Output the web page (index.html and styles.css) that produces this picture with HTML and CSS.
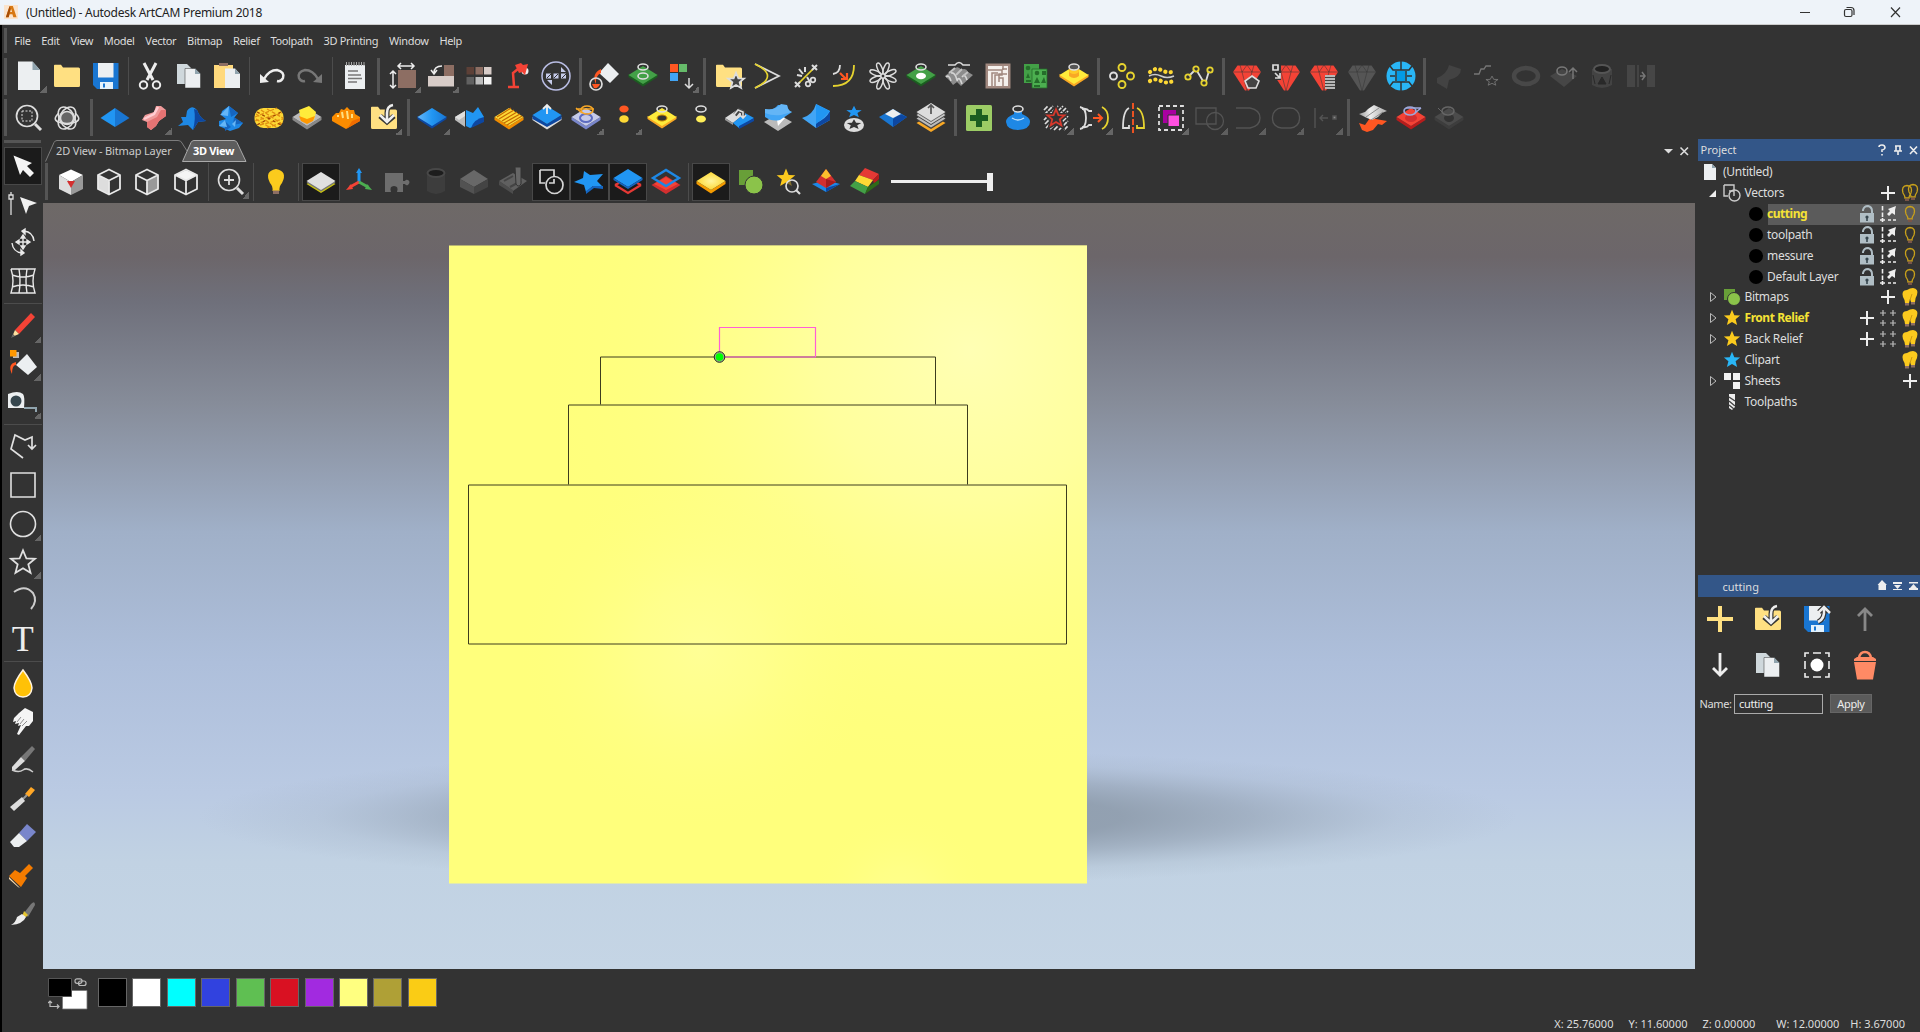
FILE: index.html
```html
<!DOCTYPE html>
<html lang="en">
<head>
<meta charset="utf-8">
<title>(Untitled) - Autodesk ArtCAM Premium 2018</title>
<link rel="stylesheet" href="styles.css">
</head>
<body>
<svg class="defs" width="0" height="0">
  <defs>
    <path id="top" d="M0-10L14.5-1L0 8L-14.5-1z"/>
    <path id="side" d="M-14.5-1L0 8V11.500L-14.500 2zM0 8L14.500-1V2L0 11.500z"/>
    <path id="star" d="M0-8.200L2.300-2.700L8.100-2.500L3.600 1.300L5.100 7L0 3.900L-5.100 7L-3.600 1.300L-8.100-2.500L-2.300-2.700z"/>
    <path id="folder" d="M-13-10.500q0-.8.8-.8H-6l2 2.800H11.500q1.500 0 1.500 1.500V9.500q0 1.500-1.500 1.500H-11.500q-1.500 0-1.500-1.500z" fill="#ffe082"/>
    <g id="copy"><path d="M-12-12H-2L3-7V8H-12z" fill="#cfd8dc"/><path d="M-4-7.500H6L11.500-2V12H-4z" fill="#eceff1" stroke="#333" stroke-width=".5"/><path d="M6-7.500V-2H11.500z" fill="#90a4ae"/></g>
    <g id="save"><path d="M-13-13H12.500V13H-9L-13 9z" fill="#1976d2"/><path d="M-8-13H7.500V1.500H-8z" fill="#eceff1"/><path d="M-6 6H7V13H-6z" fill="#e3f2fd"/><path d="M-3 7.500H-1V11.500H-3z" fill="#1976d2"/></g>
    <g id="import"><use href="#folder"/><path d="M8-13Q3-12 3-5V3M-4-2L3 4L10-2" fill="none" stroke="#333" stroke-width="5"/><path d="M9-13Q3-12 3-5V3M-4-3L3 4L10-3" fill="none" stroke="#eee" stroke-width="2.600"/></g>
    <g id="gem"><path d="M-9.500-10.500H9.500L14-4L2 14.500H-2L-14-4z"/><path d="M-14-4H14M-7-11L-5-4L0 15L5-4L7-11M-5-4L0-11L5-4" fill="none" stroke="#333" stroke-opacity=".5"/></g>
    <g id="cubeback"><path d="M0-12.500L11-7V7L0 12.500L-11 7V-7zM-11-7L0-1.500L11-7M0-1.500V12.500" fill="none" stroke="#e8e8e8" stroke-width="1.800" stroke-linejoin="round"/></g>
    <g id="brush"><path d="M1-1L8-10Q12-14 12-9L5 3z" fill="#777"/><path d="M0 0L1-3L5 1L3 3L-1 2z" fill="#e6c52f"/><path d="M-1 0L3 3Q0 10-12 11Q-7 8-6 3z" fill="#eee"/></g>
    <g id="lock"><path d="M-7-1H7V8.500H-7z" fill="#b0bec5"/><path d="M-4-3V-4Q-3-8 1-8Q5-7 5-3V0" fill="none" stroke="#b0bec5" stroke-width="2"/><circle cy="3" r="1.600" fill="#37474f"/><path d="M-.8 3H.8V7H-.8z" fill="#37474f"/></g>
    <g id="snap" fill="none" stroke="#eee" stroke-width="1.600"><path d="M-5.500-8V3" stroke-dasharray="4.500 2"/><path d="M-8 6H-3M0 6H3M5 6H8M-5.500 4V8"/><path d="M8-8L7-4L7 1L4-1L1 2L-1 0L2-3L0-5z" fill="#eee" stroke="none"/></g>
    <g id="bulb"><path d="M-2 5Q-2 3-4 0Q-6-7 0-7.500Q6-7 4 0Q2 3 2 5z" fill="none" stroke="#c9a11b" stroke-width="1.300"/><path d="M-2 5.500H2V8H-2z" fill="#795548"/></g>
    <g id="bulbs"><path d="M-5 6Q-5 3-7 0Q-9-7-3-7Q0-9 3-9Q9-8 7-2Q5 1 5 5H1L0 2L-1 6z" fill="#fbc91e"/><path d="M-5 6H-1V8.500H-5zM1 5H5V7.500H1z" fill="#8d6e63"/><path d="M0 3L2-3" stroke="#b8860b" stroke-width=".7"/></g>
    <path id="plus" d="M0-7V7M-7 0H7" stroke="#eee" stroke-width="2" fill="none"/>
    <path id="grid" d="M-5-8V-2M-8-5H-2M5-8V-2M2-5H8M-5 2V8M-8 5H-2M5 2V8M2 5H8" stroke="#bbb" stroke-width="1.200" fill="none"/>
    <path id="closed" d="M-2.500-4.500L3 0L-2.500 4.500z" fill="none" stroke="#bbb"/>
    <g id="bitmaps"><path d="M-8-8H3V3H-8z" fill="#689f38"/><circle cx="2" cy="2" r="6.500" fill="#8bc34a" stroke="#333"/></g>
    <g id="vectors" fill="none" stroke="#ccc" stroke-width="1.400"><path d="M-8-8H2V-3M-8-8V3H-4M-3-2H2V3"/><circle cx="2.500" cy="2.500" r="5.500"/></g>
    <linearGradient id="blue" x2="1"><stop stop-color="#64b5f6"/><stop offset=".5" stop-color="#2196f3"/><stop offset="1" stop-color="#1976d2"/></linearGradient>
    <radialGradient id="gold"><stop stop-color="#fff59d"/><stop offset="1" stop-color="#fdd835"/></radialGradient>
    <linearGradient id="grey" x2="1"><stop stop-color="#999"/><stop offset=".4" stop-color="#eee"/><stop offset="1" stop-color="#aaa"/></linearGradient>
  </defs>
</svg>

<div class="window">
<header class="titlebar">
  <svg class="logo" viewBox="0 0 15 15"><path d="M0 0H15V15H0z" fill="#fbe3cb"/><path d="M2 13L6 1H9.500L13.500 13H10L9 10H6L5 13z" fill="#d87812"/><path d="M6.700 7.500H8.500L7.600 4z" fill="#fff1e0"/><path d="M2 13L6 1L7 4L5 13z" fill="#a74d07"/></svg>
  <span class="title">(Untitled) - Autodesk ArtCAM Premium 2018</span>
  <svg class="winctl" viewBox="0 0 110 24" fill="none" stroke="#333" stroke-width="1.200"><path d="M4 12.500H14M95 7.500L104 17M104 7.500L95 17"/><rect x="48.500" y="9.500" width="7.500" height="7" rx="1.500"/><path d="M50.500 7.500H55Q58 7.500 58 10.500V15"/></svg>
</header>

<nav class="menu"><i class="grip"></i><span>File</span><span>Edit</span><span>View</span><span>Model</span><span>Vector</span><span>Bitmap</span><span>Relief</span><span>Toolpath</span><span>3D Printing</span><span>Window</span><span>Help</span></nav>

<div class="bar bar-main">
  <i class="grip"></i>
  <b class="more"><svg viewBox="-19 -19 38 38"><path d="M-11-14.500H3.500L11-6V14H-11z" fill="#eceff1"/><path d="M3.500-14.500V-6H11z" fill="#90a4ae"/></svg></b>
  <b><svg viewBox="-19 -19 38 38"><use href="#folder"/></svg></b>
  <b><svg viewBox="-19 -19 38 38"><use href="#save"/></svg></b>
  <i class="thin"></i>
  <b><svg viewBox="-19 -19 38 38" fill="none" stroke="#eee"><path d="M-6-13L3 4M6-13L-3 4" stroke-width="3"/><circle cx="-6.500" cy="9" r="3.700" stroke-width="2"/><circle cx="6.500" cy="9" r="3.700" stroke-width="2"/></svg></b>
  <b><svg viewBox="-19 -19 38 38"><use href="#copy"/></svg></b>
  <b><svg viewBox="-19 -19 38 38"><path d="M-13-11H6V12H-13z" fill="#ffd97c"/><path d="M-8-13H1V-10H-8z" fill="#8d6e63"/><path d="M-2-7.500H8L13-2V12H-2z" fill="#eceff1"/><path d="M8-7.500V-2H13z" fill="#90a4ae"/></svg></b>
  <i class="thin"></i>
  <b><svg viewBox="-19 -19 38 38"><path d="M-8 3Q-3-6 5-6Q13-4 11 2Q9 6 5 5" fill="none" stroke="#eee" stroke-width="2.500"/><path d="M-12-2L-12 7L-3 6z" fill="#eee"/></svg></b>
  <b><svg viewBox="-19 -19 38 38"><path d="M8 3Q3-6-5-6Q-13-4-11 2Q-9 6-5 5" fill="none" stroke="#777" stroke-width="2.500"/><path d="M12-2L12 7L3 6z" fill="#777"/></svg></b>
  <i class="thin"></i>
  <b><svg viewBox="-19 -19 38 38"><path d="M-10-11H10V13H-10z" fill="#eceff1"/><path d="M-9-12H10" stroke="#aaa" stroke-width="4" stroke-dasharray="1 1.500"/><path d="M-7-5H3M-7-1H6M-7 2.500H7M-7 6H2" stroke="#777" stroke-width="1.300"/></svg></b>
  <i class="thick"></i>
  <b class="more"><svg viewBox="-19 -19 38 38"><path d="M-5-6H13V12H-5z" fill="#8d6e63"/><path d="M-5-10H11M-2-13L-5-10L-2-7M8-13L11-10L8-7M-10-5V12M-13-2L-10-5L-7-2M-13 9L-10 12L-7 9" fill="none" stroke="#eee" stroke-width="1.500"/></svg></b>
  <b class="more"><svg viewBox="-19 -19 38 38"><path d="M3-11H13V0H3z" fill="#8d6e63"/><path d="M-13 0H13V10.500H-13z" fill="#d7ccc8"/><path d="M1-10Q-7-10-7-3M-10-6L-7-2L-4-6" fill="none" stroke="#eee" stroke-width="1.500"/></svg></b>
  <b><svg viewBox="-19 -19 38 38"><path d="M-12.500-9h7.500v7.500h-7.500z" fill="#5d4037"/><path d="M-3.500-9h7.500v7.500h-7.500z" fill="#8d6e63"/><path d="M5-9h7.500v7.500H5z" fill="#d7ccc8"/><path d="M-12.500 1h7.500v7.500h-7.500z" fill="#616161"/><path d="M-3.500 1h7.500v7.500h-7.500z" fill="#bdbdbd"/><path d="M5 1h7.500v7.500H5z" fill="#f5f5f5"/></svg></b>
  <b><svg viewBox="-19 -19 38 38"><circle cx="7" cy="-5" r="3.500" fill="#eee"/><path d="M-3-11L3-13L5-11L10-12L7-1L4-4L1-3z" fill="#f44336"/><path d="M0-7L-5-3L-4 10M-10 11H1" fill="none" stroke="#f44336" stroke-width="2.500"/></svg></b>
  <b><svg viewBox="-19 -19 38 38"><circle r="14" fill="none" stroke="#b9bde4" stroke-width="1.500"/><path d="M-10-2.500h5v5h-5zM-2.500-2.500h5v5h-5zM5-2.500h5v5H5zM5-9V-4H10zM-9 4H-4V9z" fill="#c5cae9"/><path d="M-9 2L-5-2M-2 2L2-2M6 2L10-2" stroke="#333"/></svg></b>
  <i class="thick"></i>
  <b><svg viewBox="-19 -19 38 38"><path d="M4-13L15-2L6 7L-5-3z" fill="#eceff1"/><path d="M-3-7Q-13-2-8 8Q-9 0-3-3z" fill="#ff5722"/><circle cx="-8" cy="8" r="6" fill="none" stroke="#ddd" stroke-width="1.700"/><path d="M-12 8H-4Q-6 13-10 12z" fill="#ff5722"/></svg></b>
  <b><svg viewBox="-19 -19 38 38"><use href="#side" fill="#1b5e20" y="-1"/><use href="#top" fill="#43a047"/><g fill="none" stroke="#ddd" stroke-width="1.600"><ellipse cy="-9" rx="5" ry="3"/><ellipse cy="0" rx="5" ry="3"/></g></svg></b>
  <b class="more"><svg viewBox="-19 -19 38 38"><path d="M-11-12h8v8h-8z" fill="#ff5722"/><path d="M-2-12h8v8h-8z" fill="#66bb6a"/><path d="M-11-3h8v8h-8z" fill="#42a5f5"/><path d="M8 2V12M4 8L8 12L12 8" fill="none" stroke="#ddd" stroke-width="1.500"/></svg></b>
  <i class="thick"></i>
  <b><svg viewBox="-19 -19 38 38"><use href="#folder"/><use href="#star" transform="translate(7 5)" fill="#444" stroke="#ddd" stroke-width="1.700"/></svg></b>
  <b><svg viewBox="-19 -19 38 38" fill="none" stroke-width="1.700"><path d="M-12-12L12 0L-12 12" stroke="#ddd"/><path d="M-12-12Q13 0-12 12" stroke="#e6d32f"/></svg></b>
  <b><svg viewBox="-19 -19 38 38" fill="none" stroke="#ddd" stroke-width="1.700"><path d="M-7 7L7-7" stroke="#e6d32f"/><path d="M-11 6L-6 11M-6 6L-11 11M6-11L11-6M11-11L6-6M-9-1L-4 0M-7-7L-3-2M-1-9V-4M1 1L4 6" stroke-width="2"/><circle cx="2" cy="8" r="2.300"/><circle cx="7" cy="4" r="2.300"/></svg></b>
  <b><svg viewBox="-19 -19 38 38" fill="none" stroke-width="1.800"><path d="M-11-2Q-4-3-4-11" stroke="#ddd"/><path d="M10-11Q10 10-11 10" stroke="#e6d32f"/><path d="M-4-3L2 3M3-3V3H-3" stroke="#ff5722" stroke-width="2.200"/></svg></b>
  <b><svg viewBox="-19 -19 38 38" fill="none" stroke="#ddd" stroke-width="1.500"><g id="petals"><ellipse cy="-8" rx="2.300" ry="6" transform="rotate(22)"/><ellipse cy="8" rx="2.300" ry="6" transform="rotate(22)"/><ellipse cx="-8" rx="6" ry="2.300" transform="rotate(22)"/><ellipse cx="8" rx="6" ry="2.300" transform="rotate(22)"/></g><use href="#petals" transform="rotate(45)"/></svg></b>
  <b><svg viewBox="-19 -19 38 38"><use href="#side" fill="#1b5e20" y="-1"/><use href="#top" fill="#43a047"/><ellipse cy="0" rx="5" ry="3.200" fill="#fff"/><ellipse cy="-9" rx="5" ry="3" fill="none" stroke="#ddd" stroke-width="1.600"/></svg></b>
  <b><svg viewBox="-19 -19 38 38"><path d="M-14 0L-4-8Q0-10 2-6Q7-9 9-4L14-1L2 10L-2 6L-6 9L-9 5z" fill="#8c8c8c"/><path d="M-13 1Q-10-2-8 5M-8-3Q-4-4-2 4M-2 5Q0-1 3 8M3 1Q6-3 8 4" fill="none" stroke="#d5d5d5" stroke-width="1.600"/><path d="M-4-8L-10-3M3-7L-3-1M9-4L4 0" stroke="#c2c2c2" stroke-width="2"/><path d="M-11-11H-4Q0-16 4-11H11" fill="none" stroke="#ddd" stroke-width="1.500"/></svg></b>
  <b><svg viewBox="-19 -19 38 38"><path d="M-12.500-12.500h25v25h-25z" fill="#a1887f"/><path d="M-10-10H10V10H-10z" fill="#f5f0ec"/><path d="M-10-6H4V-1H-3V10M-6 10V-3H0M9-7H4M5-10V-6M9-2H1V6M1 2H5V10" fill="none" stroke="#a1887f" stroke-width="1.500"/></svg></b>
  <b><svg viewBox="-19 -19 38 38"><path d="M-12-12H3V7H-12z" fill="#43a047"/><path d="M-4-7H11V12H-4z" fill="#4caf50" stroke="#276b2b" stroke-width=".8"/><g fill="#256d2a"><circle cx="-8" cy="-8" r="2.300"/><path d="M-10 2L-8-3L-6 2zM-10 4H-5V6H-10zM-2 7L1 1L4 7zM5 7L8 1L10 7zM-2 9H4V11H-2zM6-5H10V-1H6z"/><circle cx="1" cy="-3" r="2.300"/></g></svg></b>
  <b><svg viewBox="-19 -19 38 38"><use href="#side" fill="#f9a825" y="-1"/><use href="#top" fill="#ffeb3b"/><path d="M-5-7V0Q0 4 5 0V-7z" fill="#f9a825"/><ellipse cy="-5" rx="5" ry="3" fill="#ffca28"/><ellipse cy="-9" rx="5" ry="3" fill="#555" stroke="#ddd" stroke-width="1.600"/></svg></b>
  <i class="thick"></i>
  <b><svg viewBox="-19 -19 38 38" fill="none" stroke-width="1.900" stroke="#e6d32f"><circle cy="-8.500" r="3.500"/><circle cx="8.500" r="3.500"/><circle cy="8.500" r="3.500"/><circle cx="-8.500" r="3.500" stroke="#ddd"/></svg></b>
  <b><svg viewBox="-19 -19 38 38" fill="none"><path d="M-12 0Q-6-3 0 0T13 0" stroke="#ccc" stroke-width="1.500"/><path d="M-11-4Q-5-9 0-6T12-4M-11 5Q-5 2 0 5T12 5" stroke="#fdd835" stroke-width="4.200" stroke-dasharray=".1 5.400" stroke-linecap="round"/></svg></b>
  <b><svg viewBox="-19 -19 38 38" fill="none" stroke="#e6d32f" stroke-width="1.800"><path d="M-10 0L-4-6M-2-5L4 5M7 5L10-5" stroke="#ddd"/><circle cx="-11" cy="1" r="2.700"/><circle cx="-3" cy="-7" r="2.700"/><circle cx="5" cy="7" r="2.700"/><circle cx="11" cy="-6" r="2.700"/></svg></b>
  <i class="thick"></i>
  <b><svg viewBox="-19 -19 38 38"><use href="#gem" fill="#f44336"/><path d="M5 0L12 5L9 12H1L-2 5z" fill="#444" stroke="#ddd" stroke-width="1.600"/></svg></b>
  <b><svg viewBox="-19 -19 38 38"><use href="#gem" fill="#f44336"/><path d="M-14-12h9V4h-9z" fill="#333"/><path d="M-13-11h5v5h-5zM-11-3L-6 2M-6-3V2H-11" fill="none" stroke="#ddd" stroke-width="1.700"/></svg></b>
  <b><svg viewBox="-19 -19 38 38"><use href="#gem" fill="#f44336"/><path d="M1-1H11V13H1z" fill="#444"/><path d="M1 0H11M1 3H11M1 6H11M1 9H11M1 12H11" stroke="#ddd" stroke-width="1.700"/></svg></b>
  <b><svg viewBox="-19 -19 38 38"><use href="#gem" fill="#555"/></svg></b>
  <b><svg viewBox="-19 -19 38 38"><circle r="14.500" fill="#29b6f6"/><path d="M-4-5H4V6H-4z" fill="#039be5"/><path d="M0-15V-6M0 15V6M-11-10L-8-6H8L11-10M-11 10L-8 6H8L11 10M-5-5V5M5-5V5M-11 0H-6M6 0H11" fill="none" stroke="#333" stroke-width="1.500"/></svg></b>
  <i class="thick"></i>
  <b class="off"><svg viewBox="-19 -19 38 38"><path d="M-12 2Q-2-2 0-11L12-7Q12 1 0 4L-2 13L-12 7z" fill="#464646"/></svg></b>
  <b><svg viewBox="-19 -19 38 38" fill="none" stroke="#777" stroke-width="1.300"><path d="M-13-2H-8L-6-7H-3L-1-10H4"/><use href="#star" transform="translate(5 5) scale(.75 .6)"/></svg></b>
  <b><svg viewBox="-19 -19 38 38"><ellipse rx="12" ry="8" fill="none" stroke="#484848" stroke-width="4.500"/></svg></b>
  <b><svg viewBox="-19 -19 38 38"><path d="M-14 0L-2-7L13 0L0 11z" fill="#464646"/><ellipse cx="-2" cy="-5" rx="5" ry="4" fill="none" stroke="#777" stroke-width="1.600"/><path d="M9 3V-8M5-4L9-8L13-4" fill="none" stroke="#777" stroke-width="1.500"/></svg></b>
  <b><svg viewBox="-19 -19 38 38"><path d="M-10-7H10V9Q0 15-10 9z" fill="#434343"/><ellipse cy="-7" rx="8" ry="4" fill="#222" stroke="#555" stroke-width="2"/><path d="M-4 8L0 1L4 8zM-9-1L-7 8M9-1L7 8" fill="#292929" stroke="#292929"/></svg></b>
  <b><svg viewBox="-19 -19 38 38"><path d="M-14-11h8v22h-8zM6-11h8v22H6z" fill="#464646"/><path d="M-3-11V11" stroke="#444" stroke-width="2"/><path d="M-1 0H4M1-4L4 0L1 4" fill="none" stroke="#777" stroke-width="1.500"/></svg></b>
</div>

<div class="bar bar-relief">
  <i class="grip"></i>
  <b><svg viewBox="-19 -19 38 38" fill="none" stroke="#ddd"><circle cx="-2" cy="-2" r="10.500" stroke-width="1.700"/><path d="M-7-7H3V3H-7z" stroke-dasharray="2 1.500"/><path d="M6 6L12 12" stroke-width="3"/></svg></b>
  <b><svg viewBox="-19 -19 38 38" fill="none" stroke="#ddd" stroke-width="1.500"><circle r="6.500" fill="#666"/><ellipse rx="12" ry="7.500" transform="rotate(60)"/><ellipse rx="12" ry="7.500" transform="rotate(120)"/><path d="M-8-5Q-15 1-9 4Q0 7 9 4Q15 1 8-5"/></svg></b>
  <i class="thick"></i>
  <b><svg viewBox="-19 -19 38 38"><path d="M0-10L14.500 0L0 9z" fill="#1976d2"/><path d="M0-10L-14.500 0L0 9z" fill="#2196f3"/></svg></b>
  <b class="more"><svg viewBox="-19 -19 38 38"><path d="M-12 2L-9-3L0-6L2-12L7-12L12-8V-2L5 3L2 8L-3 12L-7 9V4z" fill="#ef9a9a"/><path d="M-7 4L3-1L7-8L12-8V-2L5 3L2 8L-3 12L-7 9z" fill="#e57373"/><path d="M-10 1L0-4L4-11" fill="none" stroke="#ffcdd2" stroke-width="2.500"/></svg></b>
  <b><svg viewBox="-19 -19 38 38"><path d="M-5-7Q0-14 5-8Q8 0 14 3L6 4L1 12L-4 7L-14 8L-9 4L-11-1L-6-1z" fill="#1e88e5"/><path d="M5-8Q8 0 14 3L6 4L1 12Q4 0 2-9z" fill="#0d47a1"/></svg></b>
  <b><svg viewBox="-19 -19 38 38"><path d="M-9-7L-2-12L7-5L3 0L12 5L8 10L-1 13L-12 8V3L-5 1L-10-3z" fill="#1e88e5"/><path d="M-2-12L7-5L0-1zM3-1L12 5L2 7zM-6 3L0 9L-6 13z" fill="#1565c0"/><path d="M-11-3L-2-12L-3-2zM-12 8L-6 2L-4 9zM1 6L5 2L4 9z" fill="#64b5f6"/></svg></b>
  <b><svg viewBox="-19 -19 38 38"><rect x="-14.500" y="-10" width="29" height="20" rx="9" fill="#fdd835"/><path d="M-14-1L8-10M-14 3L13-5M-9 7L14 1M-2 10L14 4M-8-8L13 6M-13-4L7 9M-2-9L14 0M-13 1L0 9" stroke="#e08f12" stroke-width="1.300" stroke-dasharray="4 1.500"/><path d="M-12-6L12 7M12-6L-12 7" stroke="#a34804" stroke-width="1.300" stroke-dasharray="3 3"/></svg></b>
  <b><svg viewBox="-19 -19 38 38"><use href="#side" fill="#888"/><use href="#top" fill="#bbb"/><path d="M-8-8L2-12L9-6L7 2L0 5L-6 2z" fill="#ffeb3b"/><path d="M-8-2L0 1L8-2L6 3L0 6L-6 3z" fill="#ff9800"/></svg></b>
  <b><svg viewBox="-19 -19 38 38"><path d="M-14-1L-10-5L-7-5L-5-9L-2-8L1-11L4-8L8-8L9-4L14-1V3L0 11L-14 3z" fill="#fb8c00"/><path d="M-8-3V-1M-4-6L-3 0M1-7L2 1M6-4V0" stroke="#ffe082" stroke-width="2"/><path d="M0 11L14 3V0L6 3L3 8z" fill="#f06c00"/></svg></b>
  <b class="more"><svg viewBox="-19 -19 38 38"><use href="#import"/></svg></b>
  <i class="thick"></i>
  <b class="more"><svg viewBox="-19 -19 38 38"><use href="#side" fill="#0d47a1" y="-1"/><use href="#top" fill="url(#blue)"/></svg></b>
  <b><svg viewBox="-19 -19 38 38"><path d="M-15-1L-5-7V9L-15 2z" fill="#bbb"/><path d="M-15-1L-5-7V-2L-11 2z" fill="#e0e0e0"/><path d="M-4-8L3-5L8-11L14-1V3L0 10L-4 8z" fill="#2196f3"/><path d="M14-1V4L1 10Q4 1 14-1z" fill="#0d47a1"/></svg></b>
  <b><svg viewBox="-19 -19 38 38"><use href="#side" fill="#ef8b00"/><use href="#top" fill="#fdd835"/><path d="M-12-1L2-10M-10 1L5-8M-7 3L8-6M-5 5L11-4M-2 7L13-2" stroke="#c66900" stroke-width="1.200"/></svg></b>
  <b><svg viewBox="-19 -19 38 38"><use href="#side" fill="#ddd"/><path d="M-14.500-3L0 6L14.500-3V1L0 9L-14.500 1z" fill="#0d47a1"/><use href="#top" y="-2" fill="#2196f3"/><path d="M0-4V-13M-4-9L0-13L4-9" fill="none" stroke="#eee" stroke-width="1.800"/></svg></b>
  <b class="more"><svg viewBox="-19 -19 38 38"><use href="#side" fill="#7986cb"/><use href="#top" fill="#c5cae9"/><ellipse rx="6" ry="4" fill="none" stroke="#5c6bc0" stroke-width="2"/><path d="M-10-9L8-9M-10-10L-4-5" stroke="#f9a825" stroke-width="1.500"/><ellipse cx="1" cy="-8" rx="6" ry="4" fill="none" stroke="#f9a825" stroke-width="1.600"/></svg></b>
  <b class="more"><svg viewBox="-19 -19 38 38"><ellipse cy="-9" rx="4.700" ry="3.500" fill="#ff5722"/><ellipse cy="1" rx="4.700" ry="3.800" fill="#fdd835"/></svg></b>
  <b><svg viewBox="-19 -19 38 38"><use href="#side" fill="#f9a825" y="-1"/><use href="#top" fill="#ffeb3b"/><ellipse cy="0" rx="5" ry="3" fill="#333" stroke="#c68400"/><ellipse cy="-9" rx="5" ry="3" fill="none" stroke="#ddd" stroke-width="1.600"/></svg></b>
  <b><svg viewBox="-19 -19 38 38"><ellipse cy="-9" rx="5" ry="3" fill="none" stroke="#ddd" stroke-width="1.600"/><ellipse cy="1" rx="5" ry="3.500" fill="#ffee58"/></svg></b>
  <b><svg viewBox="-19 -19 38 38"><path d="M-14 0L-2-8L4-3L-6 5z" fill="#ddd"/><path d="M-6 5L6-5L15 0L0 10z" fill="#2196f3"/><path d="M-14 0V2L-6 7V5z" fill="#999"/><path d="M15 0V3L0 11V8z" fill="#0d47a1"/><path d="M-4-3L0-8L4-6V-1" fill="none" stroke="#444" stroke-width="4"/><path d="M-5-3L-1-8L4-6L4-1M1-3L4 0L7-3" fill="none" stroke="#ddd" stroke-width="1.600"/></svg></b>
  <b><svg viewBox="-19 -19 38 38"><path d="M-14 4L0-4L14 4L0 13z" fill="#bbb"/><path d="M-2-4L7 0L0 8z" fill="#fff"/><path d="M-13-9Q-5-7 0-13L9-13Q10-7 14-6L2 2Q-6 4-13-1z" fill="#42a5f5"/><path d="M-13-9Q-3-7 3-14L9-13Q10-7 14-6L3-3Q-6-2-13-5z" fill="#64b5f6"/></svg></b>
  <b><svg viewBox="-19 -19 38 38"><path d="M-14 0Q-3-3 0-14L14-7V2L0 10z" fill="#42a5f5"/><path d="M0 10V5Q10 1 14-7V2z" fill="#0d47a1"/><path d="M0-14L14-7Q8 0 0 6z" fill="#2196f3"/></svg></b>
  <b><svg viewBox="-19 -19 38 38"><use href="#star" transform="translate(0 -6) scale(.95 .75)" fill="#2196f3"/><ellipse cy="7" rx="10" ry="7" fill="#ddd"/><use href="#star" transform="translate(0 6.500) scale(.9 .65)" fill="#333"/></svg></b>
  <b><svg viewBox="-19 -19 38 38"><path d="M-14-1L0-9L14-1L0 9z" fill="#1976d2"/><path d="M0 9L14-1L7-4L0 1z" fill="#0d47a1"/><path d="M-8-4L0-9L8-4L0 0z" fill="#eee"/></svg></b>
  <b><svg viewBox="-19 -19 38 38"><use href="#top" y="6" fill="#f9a825"/><use href="#top" y="3" fill="#444"/><use href="#top" y="1.500" fill="#bbb"/><use href="#top" y="-1" fill="#444"/><use href="#top" y="-2" fill="#ccc"/><use href="#top" y="-4" fill="#666"/><use href="#top" y="-5" fill="#ddd"/><path d="M0-4V-13M-3-10L0-13L3-10" fill="none" stroke="#555" stroke-width="1.700"/></svg></b>
  <i class="thick"></i>
  <b><svg viewBox="-19 -19 38 38"><rect x="-13" y="-13" width="26" height="26" rx="1.500" fill="#9ccc65"/><path d="M-3-9H3V-3H9V3H3V9H-3V3H-9V-3H-3z" fill="#1b5e20"/></svg></b>
  <b><svg viewBox="-19 -19 38 38"><path d="M-4-6V-4Q-12-1-12 4Q-11 12 0 12Q12 11 12 4Q12-1 4-4V-6z" fill="#1e88e5"/><path d="M-6 0Q0 4 6 0" fill="none" stroke="#bbdefb" stroke-width="1.500"/><ellipse cy="-9" rx="5" ry="3" fill="none" stroke="#ddd" stroke-width="1.600"/></svg></b>
  <b class="more"><svg viewBox="-19 -19 38 38"><path d="M-12-8L-8-12M-12-3L-3-12M-12 2L2-12M-11 6L7-12M-10 10L10-10M-6 11L12-7M-2 12L12-2M3 12L12 3M8 12L12 8" stroke="#ddd" stroke-width="1.700" stroke-dasharray="5 1"/><use href="#star" transform="scale(1.100)" fill="#333" stroke="#333" stroke-width="4"/><use href="#star" transform="scale(1.050)" fill="#333" stroke="#d7392c" stroke-width="1.700"/></svg></b>
  <b class="more"><svg viewBox="-19 -19 38 38" fill="none" stroke-width="1.800"><path d="M-14-11Q-8-10-8 0T-14 11M-12-9Q-7-10-5-7H-2M-12 9Q-7 10-5 7H-2" stroke="#ddd"/><path d="M8-11Q14-8 14 0T8 11" stroke="#e6d32f"/><path d="M-1 0H7M4-4L8 0L4 4" stroke="#ff5722" stroke-width="2"/></svg></b>
  <b><svg viewBox="-19 -19 38 38" fill="none" stroke-width="1.800"><path d="M0-15V15" stroke="#ff5722" stroke-dasharray="6 2"/><path d="M-4-10Q-10-7-10 10H-4V7" stroke="#ddd"/><path d="M4-10Q11-7 11 10H4V7" stroke="#e6d32f"/></svg></b>
  <b class="more"><svg viewBox="-19 -19 38 38"><path d="M-12-12H12V12H-12z" fill="none" stroke="#ddd" stroke-width="1.800" stroke-dasharray="4 3"/><path d="M-8-8H5V5H-8z" fill="#aa00a0"/><path d="M-3-3H8.500V8.500H-3z" fill="#ff4fe0" stroke="#333"/></svg></b>
  <b class="more off"><svg viewBox="-19 -19 38 38" fill="none" stroke="#5a5a5a" stroke-width="1.300"><path d="M-13-10H7V6H-13z"/><circle cx="6" cy="3" r="8.500"/></svg></b>
  <b class="more off"><svg viewBox="-19 -19 38 38" fill="none" stroke="#5a5a5a" stroke-width="1.400"><path d="M-12-10H2Q12-8 12 0T2 10H-12"/></svg></b>
  <b class="more off"><svg viewBox="-19 -19 38 38" fill="none" stroke="#5a5a5a" stroke-width="1.400"><rect x="-13.500" y="-10" width="27" height="20" rx="9"/></svg></b>
  <b class="more off"><svg viewBox="-19 -19 38 38" fill="none" stroke="#5a5a5a" stroke-width="1.400"><path d="M-10-10V10M-5 0H3M-2-3L-5 0L-2 3"/><path d="M8-2h3v3H8z" fill="#999"/></svg></b>
  <i class="thick"></i>
  <b><svg viewBox="-19 -19 38 38"><path d="M-14 5L-8 7L-3 0L14 3L9 7L5 6L0 12L-6 14L-11 12z" fill="#ff5722"/><path d="M-14-4L-8-6L-5-9L1-13L14-7L9-5L5-1L-1 2L-6 0z" fill="url(#grey)"/><path d="M-7-1L6-10M-2 2L10-6" stroke="#777" stroke-width=".8"/></svg></b>
  <b><svg viewBox="-19 -19 38 38"><use href="#side" fill="#b71c1c"/><use href="#top" fill="#f44336"/><ellipse cy="0" rx="6" ry="4" fill="#d32f2f"/><ellipse cx="-1" cy="-7" rx="6" ry="4" fill="none" stroke="#9fa8da" stroke-width="1.600"/><path d="M4-5L10-10M-5-10L10-10" stroke="#9fa8da" stroke-width="1.500"/></svg></b>
  <b><svg viewBox="-19 -19 38 38"><use href="#side" fill="#3d3d3d"/><use href="#top" fill="#4b4b4b"/><ellipse rx="5" ry="4" fill="#333"/><ellipse cx="-1" cy="-7" rx="6" ry="4" fill="none" stroke="#666" stroke-width="1.500"/><path d="M-6-5L-11-10" stroke="#666"/></svg></b>
</div>

<div class="workarea">
<aside class="tools">
  <i class="hgrip"></i>
  <b class="on"><svg viewBox="-19 -19 38 38"><path d="M-9.500-10.500L9-3L4 0L11 7L7 11L0 4L-3 9z" fill="#f5f5f5"/></svg></b>
  <b><svg viewBox="-19 -19 38 38"><path d="M-3-7L14-1L6 2L3 10z" fill="#f0f0f0"/><path d="M-14-9h4v4h-4zM-12-12V-9M-12-5V11" fill="none" stroke="#ddd" stroke-width="1.300"/></svg></b>
  <b><svg viewBox="-19 -19 38 38" fill="none" stroke="#e8e8e8" stroke-width="1.400"><path d="M0-5V5M-5 0H5"/><path d="M0-7L2-4H-2zM0 7L2 4H-2zM-7 0L-4-2V2zM7 0L4-2V2z" fill="#eee"/><path d="M11-1Q10-10 1-11M-11 1Q-10 10-1 11"/><path d="M2-13L-1-11L2-8zM-2 8L1 11L-2 13z" fill="#eee"/></svg></b>
  <b><svg viewBox="-19 -19 38 38" fill="none" stroke="#e8e8e8" stroke-width="1.400"><path d="M-12-12H12Q8 0 12 12H-12Q-8 0-12-12M-4-12Q-2 0-4 12M4-12Q2 0 4 12M-11-6Q0-2 11-6M-11 6Q0 2 11 6"/></svg></b>
  <i class="hsep"></i>
  <b class="more"><svg viewBox="-19 -19 38 38"><path d="M8-12L12-8L-4 9L-8 5z" fill="#f44336"/><path d="M-8 5L-4 9L-11 12z" fill="#ffe0a0"/><path d="M-10 9L-12 13L-8 11z" fill="#666"/></svg></b>
  <b class="more"><svg viewBox="-19 -19 38 38"><path d="M-10-12h6v6h-6z" fill="#bbb"/><path d="M-13-14h6.500v6.500H-13z" fill="#ff9800"/><path d="M4-10L14 3L5 11L-7 1z" fill="#eceff1"/><path d="M-7-2Q-16 0-11 10Q-11 1-7 1z" fill="#ff5722"/></svg></b>
  <b class="more"><svg viewBox="-19 -19 38 38"><path d="M-15-8Q-5-12 0-8Q2-6 1 6H-15z" fill="#eceff1"/><circle cx="-7" cy="-1" r="5.500" fill="#37474f"/><path d="M1 6H13V10" fill="none" stroke="#90a4ae" stroke-width="2"/></svg></b>
  <i class="hsep"></i>
  <b><svg viewBox="-19 -19 38 38" fill="none" stroke="#e0e0e0" stroke-width="1.700"><path d="M0 11L-12 2L-8-12L2-7L9-10V2M5-2L9 2L13-2"/></svg></b>
  <b><svg viewBox="-19 -19 38 38" fill="none" stroke="#e0e0e0" stroke-width="1.600"><path d="M-12-12H12V12H-12z"/></svg></b>
  <b class="more"><svg viewBox="-19 -19 38 38" fill="none" stroke="#e0e0e0" stroke-width="1.600"><circle r="12.500"/></svg></b>
  <b class="more"><svg viewBox="-19 -19 38 38" fill="none" stroke="#e0e0e0" stroke-width="1.200"><use href="#star" transform="translate(0 .5) scale(1.480)"/></svg></b>
  <b><svg viewBox="-19 -19 38 38" fill="none" stroke="#ccc" stroke-width="2"><path d="M-9-8Q2-16 10-7Q15 1 8 9"/></svg></b>
  <b class="letter">T</b>
  <i class="hsep"></i>
  <b><svg viewBox="-19 -19 38 38"><path d="M0-13Q9-1 9 5Q8 14 0 14T-9 5Q-9-1 0-13z" fill="#ffc107" stroke="#fff3e0" stroke-width="1.500"/></svg></b>
  <b><svg viewBox="-19 -19 38 38"><path d="M2-14L10-10V-1L6 4L3 4L-4 13L-6 12L-2 3L-5 4L-4 1L-8 2L-7-1L-10 0L-9-4L-4-9z" fill="#f5f5f5"/><path d="M-6 0L-2-5M-3 2L1-3M-1 4L4-1" stroke="#777" stroke-width=".8"/></svg></b>
  <b><svg viewBox="-19 -19 38 38"><path d="M9-14L12-11L2 1L-2-3z" fill="#777"/><path d="M-2-3L2 1L-8 10H-11V7z" fill="#ddd"/><path d="M-11 10Q-4 13 0 10T10 12" fill="none" stroke="#ccc" stroke-width="1.500"/></svg></b>
  <b><svg viewBox="-19 -19 38 38"><path d="M8-12L12-9L6-2L2-5z" fill="#ffa726"/><path d="M4-4L0 0" stroke="#999" stroke-width="2"/><path d="M-1-2L2 2L-9 12L-13 8z" fill="#ddd"/></svg></b>
  <b><svg viewBox="-19 -19 38 38"><path d="M4-13L13-5L4 4L-4-4z" fill="#7986cb"/><path d="M-4-4L4 4L-4 10H-9L-13 5z" fill="#eceff1"/></svg></b>
  <b><svg viewBox="-19 -19 38 38"><path d="M6-11L10-7L2 1L4 3L-2 12L-14 1L-8-5L-3-2z" fill="#f57c00"/><path d="M-14 2L-3 13L-5 12L-14 4z" fill="#ffe0b2"/></svg></b>
  <b><svg viewBox="-19 -19 38 38"><use href="#brush"/></svg></b>
</aside>

<main class="view">
  <div class="tabs">
    <div class="tab"><svg viewBox="0 0 142 22"><path d="M.5 21.500L9 2.500Q10 .5 12 .5H133Q136 .5 137 3L142 11" fill="none" stroke="#7c7c7c"/></svg><span>2D View - Bitmap Layer</span></div>
    <div class="tab current"><svg viewBox="0 0 65 22"><path d="M.5 21.500L9 2.500Q10 .5 12 .5H52Q54 .5 55 2.500L64 21.500z" fill="#5d5d5d" stroke="#aaa"/></svg><span>3D View</span></div>
    <svg class="tabctl" viewBox="0 0 32 22"><path d="M1 9H10L5.500 13.500z" fill="#ddd"/><path d="M17.500 7.500L25 15M25 7.500L17.500 15" stroke="#ddd" stroke-width="1.600"/></svg>
  </div>
  <div class="bar bar-view">
    <i class="grip"></i>
    <b><svg viewBox="-19 -19 38 38"><path d="M0-12.500L12-7L0 0L-12-7z" fill="#fff"/><path d="M-12-7L0 0V13L-12 7z" fill="#ddd"/><path d="M12-7L0 0V13L12 7z" fill="#999"/><path d="M-4-1H4L0 6z" fill="#d32f2f"/></svg></b>
    <b><svg viewBox="-19 -19 38 38"><path d="M-11-7L0-1V12L-11 7z" fill="#ddd"/><use href="#cubeback"/></svg></b>
    <b><svg viewBox="-19 -19 38 38"><path d="M11-7L0-1V12L11 7z" fill="#999"/><use href="#cubeback"/></svg></b>
    <b><svg viewBox="-19 -19 38 38"><path d="M0-12L11-7L0-1L-11-7z" fill="#f5f5f5"/><use href="#cubeback"/></svg></b>
    <i class="thin"></i>
    <b class="more"><svg viewBox="-19 -19 38 38" fill="none" stroke="#ddd"><circle cx="-2" cy="-2" r="10.500" stroke-width="1.600"/><path d="M-7-2H3M-2-7V3" stroke-width="1.800"/><path d="M6 6L12 12" stroke-width="3"/></svg></b>
    <i class="thin"></i>
    <b><svg viewBox="-19 -19 38 38"><path d="M-3.500 9Q-3 4-6 1Q-12-11 0-13Q12-11 6 1Q3 4 3.500 9z" fill="#fbcb1d"/><path d="M-3 8.500H3V12H-3z" fill="#8d6e63"/></svg></b>
    <i class="thin"></i>
    <b class="on"><svg viewBox="-19 -19 38 38"><use href="#top" y="3" fill="#c9c312"/><use href="#top" fill="#777" y="1.500"/><use href="#top" fill="#e0e0e0"/></svg></b>
    <b><svg viewBox="-19 -19 38 38"><path d="M0 1V-10" stroke="#2196f3" stroke-width="3"/><path d="M-3-9L0-14L3-9z" fill="#2196f3"/><path d="M0 0L-9 5" stroke="#f44336" stroke-width="3"/><path d="M-8 2L-6 7L-13 8z" fill="#f44336"/><path d="M0 0L9 5" stroke="#4caf50" stroke-width="3"/><path d="M8 2L6 7L13 8z" fill="#4caf50"/></svg></b>
    <b><svg viewBox="-19 -19 38 38" fill="#6d6d6d"><path d="M-12-9H6V-1H8Q9-3 11-2Q14 0 11 3Q9 4 8 2H6V10H0Q2 4-3 4T-6 10H-12z"/></svg></b>
    <b><svg viewBox="-19 -19 38 38"><path d="M-9-9V9Q0 15 9 9V-9z" fill="#3d3d3d"/><ellipse cy="-9" rx="8.500" ry="4" fill="#1d1d1d" stroke="#484848" stroke-width="2"/></svg></b>
    <b><svg viewBox="-19 -19 38 38"><path d="M-14-3L0-12L14-3L0 5z" fill="#686868"/><path d="M-14-3L0 5V12L-14 5z" fill="#525252"/><path d="M14-3L0 5V12L14 5z" fill="#444"/></svg></b>
    <b><svg viewBox="-19 -19 38 38"><path d="M-14-1L0-9L14-1L0 9z" fill="#606060"/><path d="M-14-1L0 8V12L-14 3z" fill="#4d4d4d"/><path d="M-9-1L0-6M-3 5L8-1" stroke="#444" stroke-width="2"/><path d="M2-15H8V2Q5 6 3 2z" fill="#666" stroke="#333"/></svg></b>
    <b class="on"><svg viewBox="-19 -19 38 38" fill="none" stroke="#d5d5d5" stroke-width="1.700"><path d="M-11-12H3V-6M-11-12V1H-6M3-3V1H-2"/><circle cx="3.500" cy="3" r="8.500"/></svg></b>
    <b class="on"><svg viewBox="-19 -19 38 38"><path d="M-5-11L1-7L14-8L8-1L14 5L4 4L-3 10L-5 3L-15 0L-6-4z" fill="#2196f3"/><path d="M14 4L4 4L-3 9V12L5 6L14 7z" fill="#1565c0"/></svg></b>
    <b class="on"><svg viewBox="-19 -19 38 38"><path d="M-13 3L0 11L13 3M-13 3L-9 1M13 3L9 1" fill="none" stroke="#e53935" stroke-width="2.200"/><use href="#top" y="-3" fill="#2196f3"/><path d="M-14.500-4L0 5L14.500-4V-2L0 7L-14.500-2z" fill="#1565c0"/></svg></b>
    <b><svg viewBox="-19 -19 38 38"><path d="M-14.500 3L0-6L14.500 3L0 12z" fill="#d32f2f"/><path d="M-12 2L0-5L12 2L0 8z" fill="#f44336"/><path d="M-13-4L0-12L13-4L0 4z" fill="none" stroke="#1e88e5" stroke-width="2.400"/></svg></b>
    <i class="thin"></i>
    <b class="on"><svg viewBox="-19 -19 38 38"><use href="#side" fill="#f59b00"/><use href="#top" fill="url(#gold)"/></svg></b>
    <b><svg viewBox="-19 -19 38 38"><path d="M-11-12H3V3H-11z" fill="#689f38"/><circle cx="4" cy="3" r="9" fill="#8bc34a" stroke="#333"/></svg></b>
    <b><svg viewBox="-19 -19 38 38"><use href="#star" transform="translate(-2 -4) scale(1.150)" fill="#fbc91e"/><circle cx="4" cy="4" r="6" fill="#333" fill-opacity=".6" stroke="#ddd" stroke-width="1.700"/><path d="M8 8L12 12" stroke="#ddd" stroke-width="2.200"/></svg></b>
    <b><svg viewBox="-19 -19 38 38"><path d="M-14 2L0-2L14 2L0 10z" fill="#1e88e5"/><path d="M14 2L0 10V6z" fill="#0d47a1"/><path d="M0-13L10 0L0 6L-10 0z" fill="#d32f2f"/><path d="M0-13L5-6L0-3L-5-6z" fill="#fbc02d"/><path d="M0-3L10 0L0 6z" fill="#a51c1c"/></svg></b>
    <b><svg viewBox="-19 -19 38 38"><path d="M0-14L14-8L8-2L-6-7z" fill="#e53935"/><path d="M-6-7L8-2L3 5L-10-1z" fill="#fdd835"/><path d="M-10-1L3 5L0 12L-15 4z" fill="#43a047"/><path d="M14-8V-3L9 2L8-2z" fill="#b71c1c"/><path d="M14-2V2L0 12L3 5L9 1z" fill="#2e6b18"/></svg></b>
    <div class="slider"><i></i></div>
  </div>
  <svg class="scene" viewBox="43 203 1652 766" preserveAspectRatio="none">
    <defs>
      <linearGradient id="sky" x2="0" y2="1">
        <stop offset="0" stop-color="#6e6967"/><stop offset=".07" stop-color="#6c666a"/><stop offset=".13" stop-color="#6f707b"/><stop offset=".26" stop-color="#868c99"/><stop offset=".35" stop-color="#949fb2"/><stop offset=".43" stop-color="#a0b0c8"/><stop offset=".6" stop-color="#aebfdb"/><stop offset=".77" stop-color="#bacae3"/><stop offset=".86" stop-color="#c1d2e3"/><stop offset="1" stop-color="#c5d5e5"/>
      </linearGradient>
      <radialGradient id="shade"><stop offset="0" stop-color="#8e9cac"/><stop offset=".4" stop-color="#8e9cac" stop-opacity=".9"/><stop offset=".6" stop-color="#8e9cac" stop-opacity=".55"/><stop offset=".82" stop-color="#96a5b5" stop-opacity=".16"/><stop offset="1" stop-color="#96a5b5" stop-opacity="0"/></radialGradient>
      <radialGradient id="shine"><stop offset="0" stop-color="#ffffb4"/><stop offset=".35" stop-color="#ffffa6" stop-opacity=".8"/><stop offset="1" stop-color="#ffff80" stop-opacity="0"/></radialGradient>
    </defs>
    <path d="M43 203H1695V969H43z" fill="url(#sky)"/>
    <ellipse cx="858" cy="817" rx="660" ry="68" fill="url(#shade)"/>
    <svg x="449" y="245.500" width="638" height="638" viewBox="449 245.500 638 638">
      <path d="M449 245H1087V884H449z" fill="#ffff7c"/>
      <circle cx="970" cy="350" r="430" fill="url(#shine)"/>
      <circle cx="700" cy="650" r="180" fill="url(#shine)" opacity=".45"/>
      <circle cx="900" cy="900" r="90" fill="url(#shine)" opacity=".3"/>
    </svg>
    <g fill="none" stroke="#3c3c1e" stroke-width="1">
      <path d="M600.500 404.500V357H935.500V404.500"/>
      <path d="M568.500 484.500V405H967.500V484.500"/>
      <path d="M468.500 485H1066.500V644H468.500z"/>
      <path d="M719.500 327.500H815.500V357H719.500z" stroke="#ff5fd7" stroke-width="1.200"/>
    </g>
    <circle cx="719.500" cy="357" r="5.300" fill="#9fae8a" stroke="#223322" stroke-width="1"/>
    <circle cx="719.500" cy="357" r="3.800" fill="#0f0"/>
  </svg>
</main>

<section class="side">
  <div class="panelhead"><span>Project</span><svg viewBox="0 0 44 22" fill="none" stroke="#eee" stroke-width="1.600"><path d="M3 8Q3 6 6 6T9 9Q8 11 6 11V13M6 15V16.500M19 7H25M20 7V12M24 7V12M18 12H26M22 12V16M34 7.500L41 15M41 7.500L34 15"/></svg></div>
  <div class="tree">
    <div class="row"><svg class="ico doc" viewBox="-10 -10 20 20"><path d="M-6-8H2L6-4V8H-6z" fill="#eceff1"/><path d="M2-8V-4H6z" fill="#90a4ae"/></svg><span>(Untitled)</span></div>
    <div class="row"><svg class="tw" viewBox="-10 -10 20 20"><path d="M3-3V4H-4z" fill="#eee"/></svg><svg class="ico" viewBox="-10 -10 20 20"><use href="#vectors"/></svg><span>Vectors</span><em><svg viewBox="-10 -10 20 20"><use href="#plus"/></svg><svg viewBox="-10 -10 20 20"><use href="#bulb" x="-3"/><use href="#bulb" x="3" y="-1"/></svg></em></div>
    <div class="row layer picked"><i class="dot"></i><span>cutting</span><em><svg viewBox="-10 -10 20 20"><use href="#lock"/></svg><svg viewBox="-10 -10 20 20"><use href="#snap"/></svg><svg viewBox="-10 -10 20 20"><use href="#bulb"/></svg></em></div>
    <div class="row layer"><i class="dot"></i><span>toolpath</span><em><svg viewBox="-10 -10 20 20"><use href="#lock"/></svg><svg viewBox="-10 -10 20 20"><use href="#snap"/></svg><svg viewBox="-10 -10 20 20"><use href="#bulb"/></svg></em></div>
    <div class="row layer"><i class="dot"></i><span>messure</span><em><svg viewBox="-10 -10 20 20"><use href="#lock"/></svg><svg viewBox="-10 -10 20 20"><use href="#snap"/></svg><svg viewBox="-10 -10 20 20"><use href="#bulb"/></svg></em></div>
    <div class="row layer"><i class="dot"></i><span>Default Layer</span><em><svg viewBox="-10 -10 20 20"><use href="#lock"/></svg><svg viewBox="-10 -10 20 20"><use href="#snap"/></svg><svg viewBox="-10 -10 20 20"><use href="#bulb"/></svg></em></div>
    <div class="row"><svg class="tw" viewBox="-10 -10 20 20"><use href="#closed"/></svg><svg class="ico" viewBox="-10 -10 20 20"><use href="#bitmaps"/></svg><span>Bitmaps</span><em><svg viewBox="-10 -10 20 20"><use href="#plus"/></svg><svg viewBox="-10 -10 20 20"><use href="#bulbs"/></svg></em></div>
    <div class="row"><svg class="tw" viewBox="-10 -10 20 20"><use href="#closed"/></svg><svg class="ico" viewBox="-10 -10 20 20"><use href="#star" fill="#fbcb1d"/></svg><span class="hot">Front Relief</span><em><svg viewBox="-10 -10 20 20"><use href="#plus"/></svg><svg viewBox="-10 -10 20 20"><use href="#grid"/></svg><svg viewBox="-10 -10 20 20"><use href="#bulbs"/></svg></em></div>
    <div class="row"><svg class="tw" viewBox="-10 -10 20 20"><use href="#closed"/></svg><svg class="ico" viewBox="-10 -10 20 20"><use href="#star" fill="#fbcb1d"/></svg><span>Back Relief</span><em><svg viewBox="-10 -10 20 20"><use href="#plus"/></svg><svg viewBox="-10 -10 20 20"><use href="#grid"/></svg><svg viewBox="-10 -10 20 20"><use href="#bulbs"/></svg></em></div>
    <div class="row"><svg class="tw" viewBox="-10 -10 20 20"></svg><svg class="ico" viewBox="-10 -10 20 20"><use href="#star" fill="#29b6f6"/></svg><span>Clipart</span><em><svg viewBox="-10 -10 20 20"><use href="#bulbs"/></svg></em></div>
    <div class="row"><svg class="tw" viewBox="-10 -10 20 20"><use href="#closed"/></svg><svg class="ico" viewBox="-10 -10 20 20"><path d="M-8-8H-1V-1H-8zM1-8H8V-1H1zM1 1H8V8H1z" fill="#f2f2f2"/></svg><span>Sheets</span><em><svg viewBox="-10 -10 20 20"><use href="#plus"/></svg></em></div>
    <div class="row"><svg class="tw" viewBox="-10 -10 20 20"></svg><svg class="ico" viewBox="-10 -10 20 20"><path d="M-3-8H3V5L0 8L-3 6z" fill="#eee"/><path d="M-3-5L3-1M-3-1L3 4M-3 3L2 7" stroke="#444" stroke-width="1.400"/></svg><span>Toolpaths</span></div>
  </div>
  <div class="panelhead layerhead"><span>cutting</span><svg viewBox="0 0 44 22"><path d="M6 5L11 10H10V15H2.500V10H1.500zM17 7H26V9H17zM18 10H25L21.500 14zM17 14H26V15H17zM33 7H42V8.500H33zM34 13L37.500 9L41 13zM33 13H42V15H33z" fill="#eee"/></svg></div>
  <div class="layertools">
    <svg viewBox="-19 -19 38 38"><path d="M0-13V13M-13 0H13" stroke="#ffe082" stroke-width="4"/></svg>
    <svg viewBox="-19 -19 38 38"><use href="#import"/></svg>
    <svg viewBox="-19 -19 38 38"><use href="#save"/><path d="M1 3Q8 0 7-10M2-7L7-12L12-7" fill="none" stroke="#333" stroke-width="5"/><path d="M1 3Q8 0 7-10M1-6L7-12L13-6" fill="none" stroke="#eee" stroke-width="2.500"/></svg>
    <svg viewBox="-19 -19 38 38"><path d="M0 12V-9M-7-3L0-10L7-3" fill="none" stroke="#888" stroke-width="2.800"/></svg>
    <svg viewBox="-19 -19 38 38"><path d="M0-12V9M-7 3L0 10L7 3" fill="none" stroke="#eee" stroke-width="2.800"/></svg>
    <svg viewBox="-19 -19 38 38"><use href="#copy"/></svg>
    <svg viewBox="-19 -19 38 38"><circle r="6.500" fill="#fff"/><path d="M-12-8V-12H-8M-4-12H4M8-12H12V-8M12-4V4M12 8V12H8M4 12H-4M-8 12H-12V8M-12 4V-4" fill="none" stroke="#eee" stroke-width="1.600"/></svg>
    <svg viewBox="-19 -19 38 38"><path d="M-11-6V-4H11V-6L8-8H-8zM-11-3H11L8 14.500H-8z" fill="#ff8a65"/><path d="M-6-7Q-5-13 0-13T6-7" fill="none" stroke="#ff8a65" stroke-width="2.500"/></svg>
  </div>
  <form class="rename"><label>Name:</label><input value="cutting"><button type="button">Apply</button></form>
</section>
</div>

<footer class="bottom">
  <div class="palette">
    <svg class="pair" viewBox="0 0 40 32"><path d="M14.500 12.500H39V31H14.500z" fill="#fff" stroke="#777" stroke-width=".8"/><path d="M.5.500H23.500V18.500H.5z" fill="#000" stroke="#555"/><g fill="none" stroke="#bbb" stroke-width="1.200"><rect x="27" y=".8" width="7" height="4.500" rx="2"/><rect x="30.500" y="3" width="7.500" height="4.500" rx="2"/><path d="M2 23V28.500H11M0 25L2 23L4 25M9 26.500L11 28.500L9 30.500"/></g></svg>
    <i style="background:#000"></i><i style="background:#fff"></i><i style="background:#0ff"></i><i style="background:#3142df"></i><i style="background:#5fbf52"></i><i style="background:#d91122"></i><i style="background:#a22ae0"></i><i style="background:#ffff80"></i><i style="background:#afa036"></i><i style="background:#facc15"></i>
  </div>
  <div class="status"><span>X: 25.76000</span><span>Y: 11.60000</span><span>Z: 0.00000</span><span class="wide">W: 12.00000</span><span>H: 3.67000</span></div>
</footer>
</div>
</body>
</html>
```
FILE: styles.css
```css
* { box-sizing: border-box; }
body {
  margin: 0;
  width: 1920px;
  height: 1032px;
  overflow: hidden;
  background: #333;
  color: #ddd;
  font: 11px/1 "Noto Sans", "Open Sans", sans-serif;
}
svg { display: block; flex: none; }
i { display: block; flex: none; font-style: normal; }
.defs { position: absolute; }

.window { display: flex; flex-direction: column; height: 1032px; }

.titlebar {
  display: flex;
  align-items: center;
  height: 25px;
  padding: 0 14px 0 4px;
  background: #eef3f9;
  border-bottom: 1px solid #ccc;
  color: #222;
}
.logo { width: 14px; height: 14px; }
.title { margin: 2px 0 0 8px; font-size: 12px; letter-spacing: -.27px; }
.winctl { width: 110px; height: 24px; margin-left: auto; }

.menu {
  display: flex;
  align-items: center;
  gap: 10.800px;
  height: 30px;
  padding-left: 2px;
  border-left: 2px solid #000;
  white-space: nowrap;
  letter-spacing: -.35px;
}
.menu .grip { height: 25px; width: 2.500px; margin-right: -3px; }

.grip { width: 3px; height: 37px; background: #555; }
.bar { display: flex; align-items: center; }
.bar b, .tools b { display: flex; flex: none; align-items: center; justify-content: center; }
.bar b { width: 38.400px; height: 38px; }
.bar b svg, .tools b svg { width: 38px; height: 38px; }
.bar-main, .bar-relief { padding-left: 2px; border-left: 2px solid #000; }
.bar-main { height: 42px; }
.bar-relief { height: 41px; }
.bar-main .grip, .bar-relief .grip { width: 2.500px; margin-right: 3.300px; }
.thin { width: 1px; height: 38px; margin: 0 2.600px; background: #4c4c4c; }
.thick { width: 3px; height: 37px; margin: 0 3.300px; background: #555; }
.more {
  background: linear-gradient(135deg, transparent 50%, #666 50%) no-repeat right 1px bottom 2px / 7px 7px;
}
.on { background-color: #1b1b1b; outline: 1px solid #484848; outline-offset: -1px; }
.off { opacity: .85; }

.workarea { display: flex; height: 831px; }
.tools {
  display: flex;
  flex: none;
  flex-direction: column;
  width: 43px;
  padding: 1px 0 0 2px;
  border-left: 2px solid #000;
}
.tools b { width: 37.500px; height: 38.400px; }
.hgrip { width: 37px; height: 3px; margin: 1px 0 3.500px; background: #555; }
.hsep { width: 38px; height: 1px; margin: 2.600px 0; background: #4c4c4c; }
.letter { font: 36px/38px "Liberation Serif", serif; color: #eee; }

.view { display: flex; flex: none; flex-direction: column; width: 1652px; }
.tabs { display: flex; height: 24px; padding: 2px 0 0 2px; }
.tab { display: grid; width: 137px; height: 22px; color: #ccc; }
.tab svg, .tab span { grid-area: 1 / 1; }
.tab svg { width: 142px; height: 22px; }
.tab span { padding: 5px 0 0 11px; letter-spacing: -.15px; white-space: nowrap; z-index: 1; }
.tab.current { width: 65px; color: #fff; font-weight: bold; }
.tab.current svg { width: 65px; }
.tab.current span { letter-spacing: -.35px; }
.tabctl { width: 32px; height: 22px; margin-left: auto; }
.bar-view { height: 41px; padding: 0 0 2px 2px; }
.bar-view .grip { margin-right: 3.400px; }
.slider { display: flex; align-items: center; width: 102px; height: 18px; margin-left: 7px; background: linear-gradient(#eee, #eee) no-repeat 0 50% / 96px 3px; }
.slider i { width: 6px; height: 18px; margin-left: auto; background: #eee; }
.bar-view .thin { margin: 0 2.800px; }
.scene { width: 1652px; height: 766px; }

.side { display: flex; flex: 1; flex-direction: column; padding-left: 2.500px; }
.panelhead {
  display: flex;
  flex: none;
  align-items: center;
  height: 22px;
  margin-top: .5px;
  padding: 0 0 0 3px;
  background: #335688;
}
.panelhead svg { width: 44px; height: 22px; margin-left: auto; }
.tree { height: 415px; padding-top: 1.500px; font-size: 12px; letter-spacing: -.3px; }
.row { display: flex; align-items: center; height: 20.850px; }
.row svg { width: 20px; height: 20px; }
.row .tw { margin-left: 5.500px; }
.row .ico { margin: 0 2.500px 0 -1px; }
.row .doc { margin: 0 3px 0 2.500px; }
.row em { display: flex; gap: 1.700px; margin-left: auto; }
.layer { margin-left: 51px; }
.dot { width: 14px; height: 14px; margin-right: 4.500px; border-radius: 50%; background: #000; }
.layer { background: linear-gradient(#333, #333) no-repeat 0 0 / 19px 100%; }
.picked { background-color: #5b5b5b; }
.picked span, .hot { color: #f5e235; font-weight: bold; letter-spacing: -.45px; }
.layerhead { margin-top: -.5px; padding-left: 25px; }
.layertools {
  display: grid;
  grid-template-columns: repeat(4, 48.500px);
  grid-auto-rows: 46px;
  margin: 3px 0 0 3px;
}
.layertools svg { width: 38px; height: 38px; }
.rename { display: flex; align-items: center; margin-top: 1.500px; padding-left: 2px; letter-spacing: -.35px; }
.rename label { width: 34.500px; }
.rename input, .rename button {
  height: 20px;
  font: inherit;
  letter-spacing: inherit;
  color: #eee;
  background: #333;
}
.rename input { width: 89px; padding: 0 4px; border: 1px solid #aaa; }
.rename button { width: 42px; height: 19px; margin-left: 7px; padding: 0; border: 1px solid #666; background: #5a5a5a; }

.bottom { display: flex; justify-content: space-between; height: 63px; border-left: 2px solid #000; }
.palette { display: flex; gap: 5.450px; height: 32px; margin: 9px 0 0 46px; }
.pair { width: 40px; height: 32px; margin-right: 4.500px; }
.palette i { width: 29px; height: 29px; border: 1px solid #666; }
.status { display: flex; align-items: center; gap: 15px; height: 16px; margin: 46px 15px 0 0; letter-spacing: 0; }
.status .wide { margin: 0 -4px 0 6px; }
```
